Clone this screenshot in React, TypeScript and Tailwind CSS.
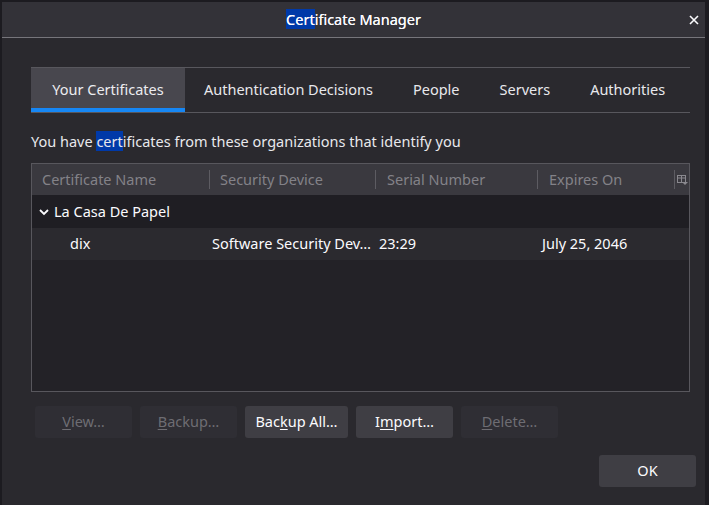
import React from "react";

const font = { fontFamily: '"Noto Sans", "Open Sans", sans-serif' };

function Btn({ children, disabled, w }: { children: React.ReactNode; disabled?: boolean; w: string }) {
  return (
    <div
      className={`${w} h-[32px] rounded-[3px] flex items-center justify-center text-[14.5px] ${
        disabled ? "bg-[#2f2e34] text-[#6e6d73]" : "bg-[#3f3e44] text-[#fbfbfe]"
      }`}
    >
      {children}
    </div>
  );
}

export default function App() {
  return (
    <div className="w-[709px] h-[505px] bg-[#1c1b20] pl-[2px] pt-[2px] pr-[4px] overflow-hidden" style={font}>
      <div className="w-[703px] h-[503px] flex flex-col bg-[#2a292e]">
        {/* title bar */}
        <div className="h-[36px] bg-[#333238] border-b border-[#76757b] flex items-center relative shrink-0">
          <div className="flex-1 text-center text-[14.5px] text-[#fbfbfe] [text-shadow:0_0_0.3px_#fbfbfe]">
            <span className="bg-[#0039a8]">Cert</span>ificate Manager
          </div>
          <svg className="absolute right-[6px] top-[13px]" width="10" height="10" viewBox="0 0 10 10">
            <path d="M1 1 L9 9 M9 1 L1 9" stroke="#fbfbfe" strokeWidth="1.6" />
          </svg>
        </div>

        <div className="pl-[29px] pr-[15px] pt-[29px] flex flex-col">
          {/* tabs */}
          <div className="h-[46px] border-t border-b border-[#58575d] flex text-[14.5px] text-[#e8e8ec]">
            <div className="w-[154px] bg-[#48474e] relative flex items-center justify-center text-[#ececf0]">
              <span>Your Certificates</span>
              <div className="absolute left-0 right-0 bottom-0 h-[4px] bg-[#1687f5]" />
            </div>
            <div className="px-[19px] flex items-center"><span>Authentication Decisions</span></div>
            <div className="pl-[21px] pr-[20px] flex items-center"><span>People</span></div>
            <div className="px-[20px] flex items-center"><span>Servers</span></div>
            <div className="px-[20px] flex items-center"><span>Authorities</span></div>
          </div>

          <div className="mt-[18px] h-[22px] flex items-center text-[14.5px] text-[#e8e8ec]">
            <span>
              You have <span className="bg-[#0039a8]">cert</span>ificates from these organizations that identify you
            </span>
          </div>

          {/* tree */}
          <div className="mt-[10px] h-[229px] border border-[#58575d] bg-[#232227] flex flex-col text-[14.5px]">
            <div className="h-[31px] bg-[#3a393f] flex items-center text-[#838288] shrink-0">
              <div className="w-[178px] pl-[10px] border-r border-[#5d5c62] h-[19px] flex items-center">Certificate Name</div>
              <div className="w-[166px] pl-[10px] border-r border-[#5d5c62] h-[19px] flex items-center">Security Device</div>
              <div className="w-[162px] pl-[11px] border-r border-[#5d5c62] h-[19px] flex items-center">Serial Number</div>
              <div className="w-[137px] pl-[11px] border-r border-[#5d5c62] h-[19px] flex items-center">Expires On</div>
              <div className="flex-1 flex items-center justify-center">
                <svg width="11" height="10" viewBox="0 0 11 10">
                  <rect x="0.5" y="0.5" width="8" height="7" fill="none" stroke="#8a898f" />
                  <path d="M0.5 3 H8.5 M4.5 0.5 V7.5" stroke="#8a898f" />
                  <path d="M5 7 H11 L8 10 Z" fill="#8a898f" />
                </svg>
              </div>
            </div>
            <div className="h-[33px] bg-[#1f1e23] flex items-center text-[#fbfbfe]">
              <svg className="ml-[7px] mr-[5px]" width="10" height="8" viewBox="0 0 10 8">
                <path d="M1 2 L5 6 L9 2" stroke="#fbfbfe" strokeWidth="1.8" fill="none" />
              </svg>
              <span>La Casa De Papel</span>
            </div>
            <div className="h-[32px] bg-[#2b2a2f] flex items-center text-[#fbfbfe]">
              <div className="w-[180px] pl-[38px]">dix</div>
              <div className="w-[167px] whitespace-nowrap overflow-hidden">Software Security Dev…</div>
              <div className="w-[162px]">23:29</div>
              <div className="flex-1 pl-[1px]">July 25, 2046</div>
            </div>
          </div>

          {/* buttons */}
          <div className="mt-[14px] pl-[4px] flex gap-[8px]">
            <Btn w="w-[97px]" disabled><span><span className="underline underline-offset-2">V</span>iew…</span></Btn>
            <Btn w="w-[97px]" disabled><span><span className="underline underline-offset-2">B</span>ackup…</span></Btn>
            <Btn w="w-[103px]"><span>Bac<span className="underline underline-offset-2">k</span>up All…</span></Btn>
            <Btn w="w-[97px]"><span>I<span className="underline underline-offset-2">m</span>port…</span></Btn>
            <Btn w="w-[97px]" disabled><span><span className="underline underline-offset-2">D</span>elete…</span></Btn>
          </div>

          <div className="mt-[17px] flex justify-end -mr-[6px]">
            <Btn w="w-[97px]">OK</Btn>
          </div>
        </div>
      </div>
    </div>
  );
}
